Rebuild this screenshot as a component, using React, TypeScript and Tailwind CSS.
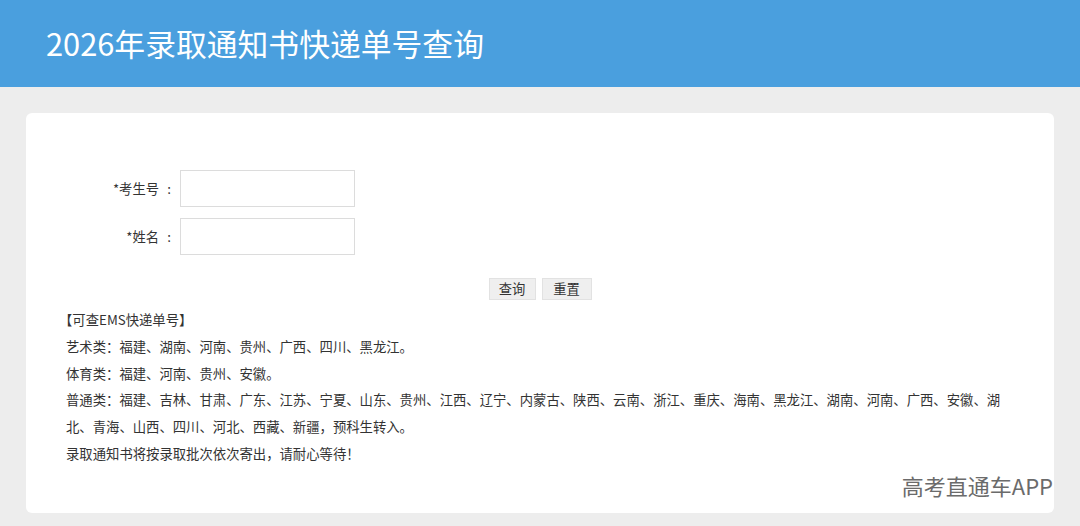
import React from "react"

const FONT = { fontFamily: '"Noto Sans CJK SC", "Noto Sans", sans-serif' }

export default function App() {
  return (
    <div className="min-h-[526px] bg-[#ededed] text-[#333]" style={FONT}>
      {/* header bar */}
      <div className="h-[87px] bg-[#4a9fde] flex items-center px-[46px]">
        <h1 className="text-[30.8px] text-white font-normal leading-none">2026年录取通知书快递单号查询</h1>
      </div>

      <div className="px-[26px] pt-[26px] pb-[13px]">
        <div className="relative bg-white rounded-[6px] h-[400px] pt-[57px] pl-[40px] pr-[42px]">
          {/* query form */}
          <div className="flex flex-col gap-[11px]">
            <div className="flex items-center">
              <label className="w-[113px] text-right text-[13.3px]">
                *考生号<span className="inline-block w-[20px] text-center">:</span>
              </label>
              <input className="ml-[1px] w-[175px] h-[37px] border border-[#dcdcdc] outline-none" />
            </div>
            <div className="flex items-center">
              <label className="w-[113px] text-right text-[13.3px]">
                *姓名<span className="inline-block w-[20px] text-center">:</span>
              </label>
              <input className="ml-[1px] w-[175px] h-[37px] border border-[#dcdcdc] outline-none" />
            </div>
          </div>

          <div className="flex justify-center gap-[6px] mt-[23px] -ml-[40px] -mr-[42px]">
            <button className="w-[47px] h-[22px] bg-[#efefef] border border-[#e2e2e2] text-[13.3px] leading-none">查询</button>
            <button className="w-[50px] h-[22px] bg-[#efefef] border border-[#e2e2e2] text-[13.3px] leading-none">重置</button>
          </div>

          {/* notes */}
          <div className="mt-[7px] text-[13.35px] leading-[26.8px] w-[945px]">
            <p className="-ml-[7px]">【可查EMS快递单号】</p>
            <p>艺术类：福建、湖南、河南、贵州、广西、四川、黑龙江。</p>
            <p>体育类：福建、河南、贵州、安徽。</p>
            <p>
              普通类：福建、吉林、甘肃、广东、江苏、宁夏、山东、贵州、江西、辽宁、内蒙古、陕西、云南、浙江、重庆、海南、黑龙江、湖南、河南、广西、安徽、湖北、青海、山西、四川、河北、西藏、新疆，预科生转入。
            </p>
            <p>录取通知书将按录取批次依次寄出，请耐心等待！</p>
          </div>

          {/* watermark */}
          <div className="absolute right-[1px] bottom-[17px] text-[22px] text-[#6b6b6b] leading-none">高考直通车APP</div>
        </div>
      </div>
    </div>
  )
}
